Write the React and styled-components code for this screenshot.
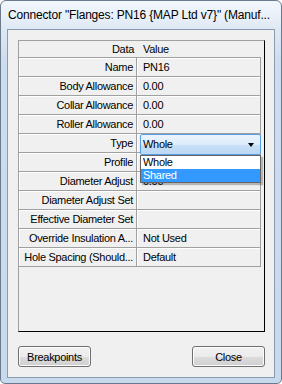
import React from 'react'
import styled, { createGlobalStyle } from 'styled-components';

const rows = [
  { label: 'Name', value: 'PN16' },
  { label: 'Body Allowance', value: '0.00' },
  { label: 'Collar Allowance', value: '0.00' },
  { label: 'Roller Allowance', value: '0.00' },
  { label: 'Type', combo: true },
  { label: 'Profile', value: '' },
  { label: 'Diameter Adjust', value: '0.00' },
  { label: 'Diameter Adjust Set', value: '' },
  { label: 'Effective Diameter Set', value: '' },
  { label: 'Override Insulation A...', value: 'Not Used' },
  { label: 'Hole Spacing (Should...', value: 'Default' },
];

const App = () => {
  return (
    <>
      <GlobalStyle />
      <Window>
        <TitleBar>Connector {'"'}Flanges: PN16 {'{'}MAP Ltd v7{'}'}{'"'} (Manuf...</TitleBar>
        <Client>
          <Panel>
            <Grid>
              <HeadCell $align="right">Data</HeadCell>
              <HeadCell>Value</HeadCell>
              {rows.map((r) => (
                <React.Fragment key={r.label}>
                  <LabelCell>{r.label}</LabelCell>
                  <ValueCell>
                    {r.combo ? (
                      <>
                        <Combo>
                          <span>Whole</span>
                          <Arrow />
                        </Combo>
                        <ListBox>
                          <ListItem>Whole</ListItem>
                          <ListItem $selected>Shared</ListItem>
                        </ListBox>
                      </>
                    ) : r.value}
                  </ValueCell>
                </React.Fragment>
              ))}
            </Grid>
          </Panel>
          <ButtonRow>
            <Button>Breakpoints</Button>
            <Button>Close</Button>
          </ButtonRow>
        </Client>
      </Window>
    </>
  )
}

export default App


// <----------------------------------------- CSS ------------------------------------------------->

const GlobalStyle = createGlobalStyle`
body{
    margin: 0;
    background: #ffffff;
}
`;

const Window = styled.div`
width: 282px;
height: 384px;
box-sizing: border-box;
border: 1px solid #6b7a8d;
border-radius: 6px 6px 5px 5px;
background: linear-gradient(to bottom, #f3f7fc 0px, #dfe9f5 28px, #cddcee 60px, #c9d9ec 100%);
padding: 0 6px 5px 6px;
display: flex;
flex-direction: column;
overflow: hidden;
`;

const TitleBar = styled.div`
height: 28px;
display: flex;
align-items: center;
padding-left: 1px;
font-family: "Liberation Sans", Arial, sans-serif;
font-size: 12px;
letter-spacing: -0.18px;
color: #000;
white-space: nowrap;
`;

const Client = styled.div`
flex: 1;
border: 1px solid #8a9bb0;
background: #f0f0f0;
padding: 10px 9px 10px 10px;
display: flex;
flex-direction: column;
font-family: "Liberation Sans", Arial, sans-serif;
font-size: 11px;
letter-spacing: -0.3px;
color: #000;
`;

const Panel = styled.div`
height: 292px;
box-sizing: border-box;
border: 1px solid;
border-color: #a0a0a0 #000 #000 #a0a0a0;
`;

const Grid = styled.div`
display: grid;
grid-template-columns: 118px 124px;
grid-template-rows: 17px;
grid-auto-rows: 19px;
`;

const HeadCell = styled.div`
box-sizing: border-box;
border-bottom: 1px solid #a0a0a0;
line-height: 16px;
text-align: ${p => p.$align || 'left'};
padding: ${p => p.$align ? '0 3px 0 0' : '0 0 0 6px'};
white-space: nowrap;
`;

const Cell = styled.div`
box-sizing: border-box;
border-right: 1px solid #a0a0a0;
border-bottom: 1px solid #a0a0a0;
box-shadow: inset 1px 1px 0 #ffffff;
line-height: 18px;
white-space: nowrap;
`;

const LabelCell = styled(Cell)`
text-align: right;
padding-right: 3px;
overflow: hidden;
`;

const ValueCell = styled(Cell)`
padding-left: 6px;
position: relative;
`;

const Combo = styled.div`
position: absolute;
left: 3px;
top: 0px;
right: -1px;
height: 21px;
box-sizing: border-box;
border: 1px solid #569de5;
border-radius: 2px;
background: linear-gradient(to bottom, #ecf4fc 0%, #dcecfc 50%, #c9e0f7 50%, #bcd8f3 100%);
display: flex;
align-items: center;
justify-content: space-between;
padding: 0 6px 0 2px;
z-index: 2;
span{
    line-height: 19px;
}
`;

const Arrow = styled.div`
width: 0;
height: 0;
border-left: 3.5px solid transparent;
border-right: 3.5px solid transparent;
border-top: 4px solid #000;
`;

const ListBox = styled.div`
position: absolute;
left: 3px;
top: 21px;
right: -1px;
box-sizing: border-box;
border: 1px solid #646464;
background: #ffffff;
box-shadow: 2px 2px 1px rgba(0,0,0,0.25);
z-index: 3;
`;

const ListItem = styled.div`
height: 13px;
line-height: 13px;
padding-left: 2px;
background: ${p => p.$selected ? '#3399ff' : 'transparent'};
color: ${p => p.$selected ? '#ffffff' : '#000'};
`;

const ButtonRow = styled.div`
margin-top: 14px;
display: flex;
justify-content: space-between;
`;

const Button = styled.button`
width: 73px;
height: 21px;
box-sizing: border-box;
border: 1px solid #707070;
border-radius: 3px;
background: linear-gradient(to bottom, #f2f2f2 0%, #ebebeb 50%, #dddddd 50%, #cfcfcf 100%);
box-shadow: inset 0 0 0 1px #fcfcfc;
font-family: "Liberation Sans", Arial, sans-serif;
font-size: 11px;
letter-spacing: -0.3px;
color: #000;
padding: 0;
`;
